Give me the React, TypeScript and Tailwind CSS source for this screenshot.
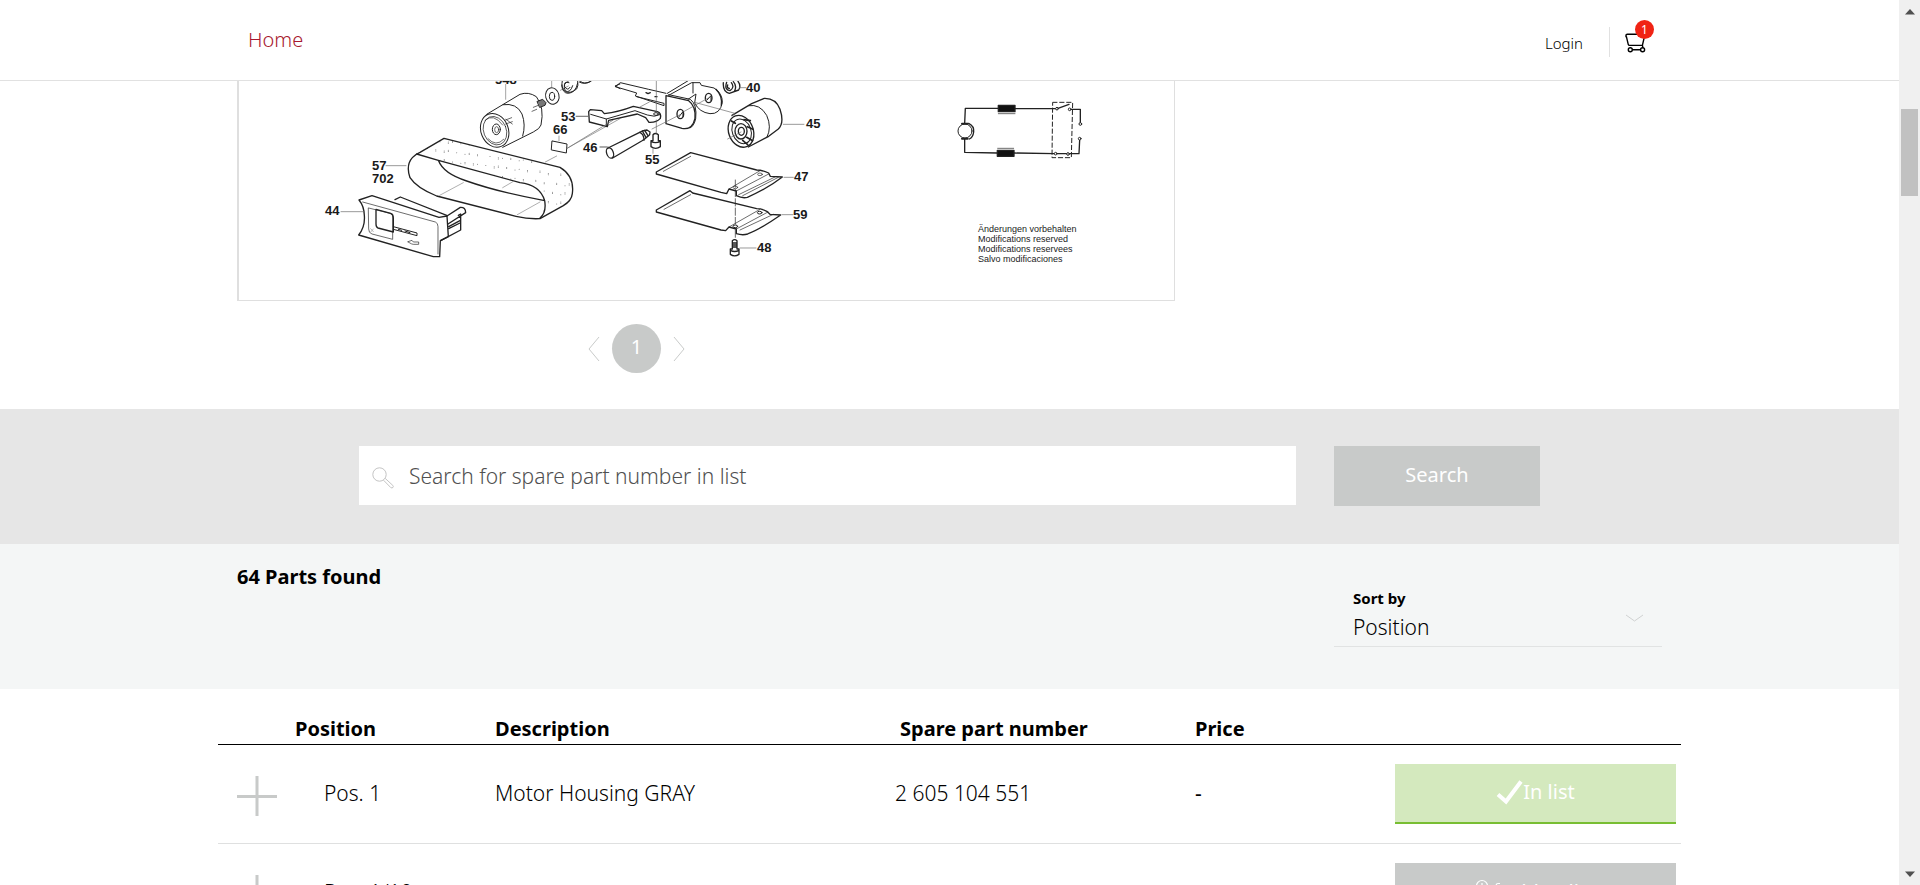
type Part = {
  position: string;
  description: string;
  partNumber: string;
  price: string;
  inList: boolean;
};

const parts: Part[] = [
  { position: "Pos. 1", description: "Motor Housing GRAY", partNumber: "2 605 104 551", price: "-", inList: true },
  { position: "Pos. 1/10", description: "", partNumber: "", price: "", inList: false },
];

// Grain of the sanding belt, spread by a small deterministic generator.
const grain = Array.from({ length: 260 }, (_, i) => ({
  x: 285 + ((i * 137.5) % 475),
  y: 205 + ((i * 61.8 + (i % 7) * 13) % 230),
}));

function CartIcon() {
  return (
    <svg className="h-5 w-[22px]" viewBox="0 0 22 20" fill="none" stroke="#000" strokeWidth="1.4" aria-hidden="true">
      <path d="M1 4.2V2.6Q1 1.2 2.4 1.2H20L17.4 12.4H4.4Q3.6 12.4 3.3 11.6L1.4 3.6" />
      <path d="M17.4 12.4L18 15M7.4 16.7H15.6" />
      <circle cx="5.3" cy="16.7" r="2" />
      <circle cx="17.6" cy="16.7" r="2" />
    </svg>
  );
}

function Header() {
  return (
    <header className="border-b border-[#e1e1e1] bg-white">
      <div className="mx-auto flex h-20 w-full max-w-[1425px] items-center justify-between pl-[11px] pr-3">
        <a href="#home" className="text-xl font-light text-[#a8192f]">Home</a>
        <div className="flex items-center pt-1">
          <a href="#login" className="pr-[26px] pt-0.5 text-[15px] font-light text-black">Login</a>
          <button type="button" aria-label="Shopping cart" className="relative flex h-[30px] items-end border-l border-[#e1e1e1] pb-1 pl-[15px] pr-[3px]">
            <CartIcon />
            <span className="absolute -right-1 -top-[7px] flex size-[19px] items-center justify-center rounded-full bg-[#f02314] text-xs font-normal text-white">1</span>
          </button>
        </div>
      </div>
    </header>
  );
}

function ExplodedDrawing() {
  return (
    <svg className="block w-full" viewBox="239 81 935 219" fill="none" stroke="#222" strokeLinejoin="round" strokeLinecap="round" role="img" aria-label="Exploded drawing">
      <defs>
        <clipPath id="belt">
          <path d="M290 252L372 205L720 292Q762 315 757 375Q752 395 660 444L674 392Q660 345 600 338L355 271Z" />
        </clipPath>
      </defs>

      <g transform="translate(320 70) scale(.33333)" strokeWidth="3">
        {/* drive roller */}
        <path d="M500 133L600 73Q625 64 649 80Q674 112 663 165Q660 176 640 186L548 232" />
        <path d="M549 104Q590 98 606 132Q618 165 608 198" />
        <ellipse cx="524" cy="181" rx="41" ry="52" transform="rotate(-22 524 181)" />
        <ellipse cx="525" cy="182" rx="34" ry="44" transform="rotate(-22 525 182)" strokeWidth="2" />
        <path d="M495 151Q520 128 548 165M504 206Q528 232 551 208" strokeWidth="2" />
        <ellipse cx="529" cy="178" rx="12" ry="16" />
        <ellipse cx="530" cy="179" rx="6" ry="9" strokeWidth="2" />
        <path d="M554 151L575 143M557 162L577 155M558 148L577 162M640 112L655 106M636 124L650 118" strokeWidth="2" />
        <path d="M652 94L668 88L678 98L675 106L660 112Z" fill="#777" />
        <path d="M557 43V88M695 20V50M721 61L745 48" stroke="#777" strokeWidth="2" />
        {/* washers */}
        <ellipse cx="697" cy="78" rx="20" ry="25" transform="rotate(-14 697 78)" />
        <ellipse cx="696" cy="79" rx="8" ry="12" />
        <path d="M727 31Q722 54 736 65Q750 72 770 57Q776 48 773 31M780 33Q792 46 814 33M747 38Q730 32 734 50Q743 64 750 52" />
        <path d="M900 42L885 48L900 56" />
        {/* plate 66 */}
        <path d="M697 213L741 222L739 249L695 240Z" />
        <path d="M717 198V212M741 235L900 146M676 276L710 258" stroke="#777" strokeWidth="2" />
        {/* sanding belt */}
        <g clipPath="url(#belt)" fill="#777" stroke="none">
          {grain.map((dot, i) => (
            <circle key={i} cx={dot.x} cy={dot.y} r="1.5" />
          ))}
        </g>
        <path d="M372 205L720 292Q764 318 757 371Q755 392 730 407L660 446Q625 448 588 439L350 378Q290 354 270 323Q257 286 277 263Q284 254 300 247Z" strokeWidth="4" />
        <path d="M290 252L355 271L600 338Q660 345 674 392Q530 365 440 333Q370 311 355 271M674 392Q680 428 660 444" strokeWidth="4" />
        <path d="M359 376L430 338M548 353L582 333M592 434L660 396" stroke="#888" strokeWidth="2" />
        {/* cover 44 */}
        <path d="M117 390L156 377L357 442L381 438L385 500L361 512L359 560L340 560L116 495Q136 470 133 436Q132 408 117 390Z" strokeWidth="4" />
        <path d="M128 396L346 456Q354 459 354 470V552" strokeWidth="2" />
        <path d="M146 414L218 432V508L156 492Q146 489 146 478Z" strokeWidth="2" />
        <path d="M168 418L212 430Q220 434 220 444V486L174 474Q168 472 168 462Z" strokeWidth="4" />
        <path d="M220 470L291 489V497L220 478M235 478L245 481M255 483L270 488" />
        <path d="M264 515L276 511L280 516H296V523H280L276 522Z" strokeWidth="2" />
        <path d="M225 389L241 381L380 436M381 438L421 412Q437 411 437 428L384 462M415 436L422 432V480L362 512M386 470L420 452M386 476L420 459" strokeWidth="4" />
        <path d="M152 476L160 485M152 486L160 477" stroke="#999" strokeWidth="2" />
        <path d="M198 287H258M63 425H131M769 139H803M840 231H861" stroke="#666" strokeWidth="2" />
      </g>

      <g transform="translate(560 70) scale(.33333)" strokeWidth="3">
        {/* lever */}
        <path d="M166 50L181 38L266 58L318 70M166 50L230 69L226 78L312 107V100L230 80" />
        <path d="M258 68L264 71L271 68M285 80H291" strokeWidth="4" />
        {/* clamp 53 */}
        <path d="M86 125L91 119L125 122L133 131Q175 126 220 109L292 125Q305 129 301 145Q290 158 267 157L257 143L232 132L146 151L142 170L88 156Z" strokeWidth="4" />
        <path d="M92 133L139 147V169M139 147L225 122L262 135Q284 143 300 134" />
        <ellipse cx="288" cy="132" rx="7" ry="4" />
        {/* bracket */}
        <path d="M318 77V161L366 175Q397 181 405 145Q408 108 386 92Z" strokeWidth="4" />
        <path d="M326 74L391 88Q412 104 407 146Q402 169 390 174" />
        <ellipse cx="361" cy="132" rx="10" ry="14" strokeWidth="4" />
        <path d="M357 140L369 125V140" />
        <path d="M322 70L383 33M326 76L395 38H420L424 46L462 54Q488 70 487 98Q480 133 450 131Q418 127 404 99L408 72L384 88M399 38V69" />
        <path d="M468 58Q488 78 484 106" strokeWidth="4" />
        <ellipse cx="446" cy="84" rx="10" ry="14" strokeWidth="4" />
        <path d="M441 90L453 77V92" />
        <path d="M5 45Q7 70 25 70Q48 68 53 39M24 35Q6 40 16 63Q31 70 38 47M58 36Q73 45 91 35" />
        {/* bearing 40 */}
        <path d="M490 38Q488 65 508 70L536 60Q544 47 534 34M500 37Q492 60 510 62Q525 52 514 38M520 35Q532 48 523 65M503 45Q500 54 508 55" strokeWidth="4" />
        {/* roller 45 */}
        <path d="M516 136L575 101L613 85Q648 84 660 118Q674 160 654 178L626 199L565 231" strokeWidth="4" />
        <path d="M566 107Q600 101 620 136Q636 172 621 201" />
        <ellipse cx="543" cy="184" rx="37" ry="49" transform="rotate(-20 543 184)" strokeWidth="4" />
        <ellipse cx="545" cy="184" rx="28" ry="38" transform="rotate(-20 545 184)" />
        <ellipse cx="543" cy="184" rx="18" ry="23" strokeWidth="4" />
        <ellipse cx="544" cy="184" rx="9" ry="12" strokeWidth="4" />
        <path d="M552 149L571 152M562 170L579 178M560 202L578 212M548 211L563 224M526 160L514 153" strokeWidth="5" />
        {/* pin 46 */}
        <path d="M144 234L239 187L247 183L261 180L270 186L269 194L254 207L245 213L158 264" strokeWidth="4" />
        <ellipse cx="150" cy="249" rx="10" ry="16" transform="rotate(-20 150 249)" strokeWidth="4" />
        <path d="M239 187Q252 192 252 211M247 183L258 202M254 181L264 197" strokeWidth="4" />
        {/* screw 55 */}
        <path d="M279 194Q286 187 295 194V212H301V230Q287 240 273 230V212H279ZM273 214Q286 222 301 214" strokeWidth="4" />
        <path d="M289 30V125M289 150V190M279 236V250M20 236L160 150M276 177L360 134M238 112L268 96M371 125L445 84M404 97L525 130L516 138M503 207L543 186M538 53H558M48 139H84M120 231H146M670 163H732" stroke="#666" strokeWidth="2" />
        {/* plate 47 */}
        <path d="M289 306L392 248L590 300Q606 300 626 309L631 319L667 321Q625 354 562 382Q548 386 529 377V363L507 357L500 371L483 367L289 312Z" strokeWidth="4" />
        <path d="M310 304L392 259M507 357L600 302M529 363L626 312M536 374L645 321M548 377L655 322" strokeWidth="2" />
        <ellipse cx="600" cy="313" rx="7" ry="4" strokeWidth="2" />
        <ellipse cx="526" cy="352" rx="7" ry="4" strokeWidth="2" />
        {/* plate 59 */}
        <path d="M289 420L390 362L398 369L590 416Q606 416 622 425L630 433L662 435Q600 478 563 492Q548 497 529 491V477L507 471L497 482L483 480L289 426Z" strokeWidth="4" />
        <path d="M312 418L392 374M507 471L600 418M529 477L624 426M540 480L640 433" strokeWidth="2" />
        <ellipse cx="599" cy="428" rx="7" ry="4" />
        <ellipse cx="526" cy="469" rx="7" ry="4" />
        {/* screw 48 */}
        <path d="M517 512Q524 506 531 512V537H537V553Q524 562 511 553V537H517ZM517 519H531M517 525H531M517 531H531M511 541Q524 548 537 541" strokeWidth="4" />
        <path d="M526 330V462M526 480V506" strokeDasharray="22 6" strokeWidth="2" />
        <path d="M672 322H700M666 434H698M540 534H588" stroke="#666" strokeWidth="2" />
      </g>

      <g transform="translate(920 70) scale(.33333)" strokeWidth="4">
        {/* wiring diagram */}
        <path d="M134 160L136 115H234M285 116H409M134 207V247L232 249M282 249L403 251M411 251H440M453 118H481V158M448 251H477L479 210M414 115L447 103" />
        <circle cx="135" cy="183" r="21" strokeWidth="3" />
        <path d="M146 160Q163 168 161 186Q159 202 148 207" />
        <path d="M126 161H143M126 206H143" strokeWidth="6" />
        <path d="M235 106H285V125H235ZM232 241H282V259H232Z" fill="#111" />
        <path d="M235 131H285M233 235H281" strokeWidth="2" />
        <path d="M398 97H458L454 263H396Z" strokeWidth="3" strokeDasharray="13 8" />
        <g fill="#fff" strokeWidth="3">
          <circle cx="411" cy="116" r="4" />
          <circle cx="449" cy="118" r="4" />
          <circle cx="481" cy="162" r="4" />
          <circle cx="479" cy="206" r="4" />
          <circle cx="407" cy="251" r="4" />
          <circle cx="444" cy="252" r="4" />
        </g>
      </g>

      <g className="font-['Liberation_Sans',sans-serif]" fill="#1a1a1a" stroke="none" fontSize="13" fontWeight="700">
        <text x="495" y="84">548</text>
        <text x="561" y="121">53</text>
        <text x="553" y="134">66</text>
        <text x="583" y="152">46</text>
        <text x="645" y="164">55</text>
        <text x="746" y="92">40</text>
        <text x="806" y="128">45</text>
        <text x="794" y="181">47</text>
        <text x="793" y="219">59</text>
        <text x="757" y="252">48</text>
        <text x="372" y="170">57</text>
        <text x="372" y="183">702</text>
        <text x="325" y="215">44</text>
      </g>
      <g className="font-['Liberation_Sans',sans-serif]" fill="#222" stroke="none" fontSize="9">
        <text x="978" y="232">Änderungen vorbehalten</text>
        <text x="978" y="242">Modifications reserved</text>
        <text x="978" y="252">Modifications reservees</text>
        <text x="978" y="262">Salvo modificaciones</text>
      </g>
    </svg>
  );
}

function Pager() {
  return (
    <nav aria-label="Drawing pages" className="flex items-center justify-center gap-3 pt-[23px] pr-[139px]">
      <button type="button" aria-label="Previous page">
        <svg className="h-[26px] w-3" viewBox="0 0 12 26" fill="none" stroke="#c9cbca" aria-hidden="true">
          <path d="M11 1L1 13L11 25" />
        </svg>
      </button>
      <button type="button" className="size-[49px] rounded-full bg-[#c8cac9] pb-1 text-xl text-white">1</button>
      <button type="button" aria-label="Next page">
        <svg className="h-[26px] w-3" viewBox="0 0 12 26" fill="none" stroke="#c9cbca" aria-hidden="true">
          <path d="M1 1L11 13L1 25" />
        </svg>
      </button>
    </nav>
  );
}

function SearchBar() {
  return (
    <section className="bg-[#e6e6e6] pb-[38px] pt-[37px]">
      <form className="mx-auto flex max-w-[1181px] items-start gap-[38px]">
        <label className="flex h-[59px] flex-1 items-center gap-[15px] bg-white pl-[13px]">
          <svg className="mt-1 size-[22px] shrink-0" viewBox="0 0 22 22" fill="none" stroke="#c4c4c4" aria-hidden="true">
            <circle cx="7.5" cy="7.5" r="6.7" />
            <path d="M11.5 13.2L18.8 20.6Q20 21.4 21 20.4Q21.8 19.4 20.8 18.4L13.2 11.4" />
          </svg>
          <input
            type="text"
            aria-label="Search for spare part number in list"
            placeholder="Search for spare part number in list"
            className="h-full w-full bg-transparent text-[21px] font-light text-black outline-none placeholder:text-[#505050]"
          />
        </label>
        <button type="submit" className="h-[60px] w-[206px] bg-[#c8cac9] pb-0.5 text-xl text-white">Search</button>
      </form>
    </section>
  );
}

function ResultsBar() {
  return (
    <section className="bg-[#f4f6f6] pb-[42px] pt-5">
      <div className="mx-auto flex max-w-[1425px] items-start justify-between">
        <h2 className="text-xl font-bold leading-[26px]">64 Parts found</h2>
        <div className="relative mt-[22px] w-[328px] border-b border-[#e1e3e3] pl-[19px]">
          <label htmlFor="sort" className="block text-[15px] font-bold leading-6">Sort by</label>
          <select id="sort" className="block h-9 w-full appearance-none bg-transparent text-[21px] font-light outline-none">
            <option>Position</option>
            <option>Description</option>
          </select>
          <svg className="pointer-events-none absolute right-[18px] top-7 h-2 w-[19px]" viewBox="0 0 19 8" fill="none" stroke="#d0d2d2" aria-hidden="true">
            <path d="M1 1L9.5 7L18 1" />
          </svg>
        </div>
      </div>
    </section>
  );
}

function ListButton({ inList }: { inList: boolean }) {
  return inList ? (
    <button type="button" className="flex h-[60px] w-full items-center justify-center border-b-2 border-[#78be33] bg-[#d4e9be] pb-0.5 text-xl font-normal text-white">
      <svg className="h-[26px] w-[27px]" viewBox="0 0 27 26" fill="none" stroke="#fff" strokeWidth="4" aria-hidden="true">
        <path d="M2 15.5L10 22.5L25 2.5" />
      </svg>
      In list
    </button>
  ) : (
    <button type="button" className="flex h-[60px] w-full items-center justify-center bg-[#c8cac9] pb-0.5 text-xl font-normal text-white">
      <svg className="h-[26px] w-[26px]" viewBox="0 0 26 26" fill="none" stroke="#fff" strokeWidth="1.2" aria-hidden="true">
        <circle cx="7" cy="7" r="5.5" />
        <path d="M7 4V10M4 7H10M25 4.5H23Q21 4.5 21 7L19 17H6L4.5 12" />
        <circle cx="8" cy="21" r="2" />
        <circle cx="18" cy="21" r="2" />
      </svg>
      Add to list
    </button>
  );
}

function PartsTable() {
  return (
    <table className="mx-auto mt-6 w-full max-w-[1463px] table-fixed border-separate border-spacing-0 text-left">
      <colgroup>
        <col className="w-[77px]" />
        <col className="w-[200px]" />
        <col />
        <col className="w-[300px]" />
        <col className="w-[200px]" />
        <col className="w-[286px]" />
      </colgroup>
      <thead>
        <tr className="text-xl leading-[31px] *:border-b *:border-black *:p-0 *:font-bold">
          <th aria-label="Details" />
          <th>Position</th>
          <th>Description</th>
          <th>
            <span className="pl-[5px]">Spare part number</span>
          </th>
          <th>Price</th>
          <th aria-label="List" />
        </tr>
      </thead>
      <tbody>
        {parts.map((part) => (
          <tr key={part.position} className="h-[99px] text-[21px] font-light *:border-b *:border-[#dfe0e0]">
            <td className="pl-[19px] pt-1">
              <button type="button" aria-label="Show details" className="block">
                <svg className="size-10" viewBox="0 0 40 40" stroke="#c8cac9" strokeWidth="3" aria-hidden="true">
                  <path d="M20 0V40M0 20.5H40" />
                </svg>
              </button>
            </td>
            <td className="pl-[29px]">{part.position}</td>
            <td>{part.description}</td>
            <td>{part.partNumber}</td>
            <td className="font-normal">{part.price}</td>
            <td className="pr-[5px]">
              <ListButton inList={part.inList} />
            </td>
          </tr>
        ))}
      </tbody>
    </table>
  );
}

function ScrollRail() {
  return (
    <div aria-hidden="true" className="flex w-[21px] shrink-0 flex-col items-center justify-between bg-[#f0f0f0] pb-2 pt-[9px]">
      <div className="flex flex-col items-center gap-[94px]">
        <svg className="h-[6px] w-[10px]" viewBox="0 0 10 6" fill="#505050">
          <path d="M0 5.5L5 0L10 5.5Z" />
        </svg>
        <div className="h-[87px] w-[17px] bg-[#c1c1c1]" />
      </div>
      <svg className="h-[6px] w-[10px]" viewBox="0 0 10 6" fill="#505050">
        <path d="M0 .5L5 6L10 .5Z" />
      </svg>
    </div>
  );
}

export default function App() {
  return (
    <div className="flex h-screen overflow-hidden bg-white font-['Noto_Sans',sans-serif] text-black">
      <main className="min-w-0 flex-1 overflow-hidden">
        <Header />
        <section className="mx-auto max-w-[1425px] pb-9">
          <div className="max-w-[938px] border-b border-l-2 border-r border-[#dfdfdf]">
            <ExplodedDrawing />
          </div>
          <div className="max-w-[938px]">
            <Pager />
          </div>
        </section>
        <SearchBar />
        <ResultsBar />
        <PartsTable />
      </main>
      <ScrollRail />
    </div>
  );
}
